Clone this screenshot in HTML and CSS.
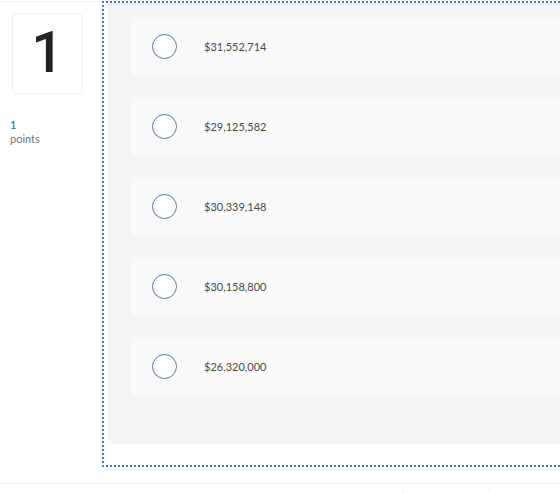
FILE: index.html
```html
<!DOCTYPE html>
<html lang="en">
<head>
<meta charset="utf-8">
<title>Question 1</title>
<link rel="stylesheet" href="styles.css">
</head>
<body>
<div class="topline"></div>
<div class="question">
  <div class="meta">
    <div class="qnum">1</div>
    <div class="pts"><span class="pts-val">1</span><span class="pts-label">points</span></div>
  </div>
  <div class="answer-area">
    <div class="panel">
      <label class="option"><span class="radio"></span><span class="opt-text">$31,552,714</span></label>
      <label class="option"><span class="radio"></span><span class="opt-text">$29,125,582</span></label>
      <label class="option"><span class="radio"></span><span class="opt-text">$30,339,148</span></label>
      <label class="option"><span class="radio"></span><span class="opt-text">$30,158,800</span></label>
      <label class="option"><span class="radio"></span><span class="opt-text">$26,320,000</span></label>
    </div>
  </div>
</div>
<div class="footer">
  <div class="f-spacer"></div>
  <div class="f-btn"></div>
  <div class="f-btn"></div>
</div>
</body>
</html>
```
FILE: styles.css
```css
html, body {
  margin: 0;
  padding: 0;
  background: #fff;
  overflow: hidden;
  font-family: Lato, "Open Sans", sans-serif;
}
body {
  width: 760px;
}
.topline {
  height: 1px;
  border-bottom: 1px solid #f0f0f0;
}
.question {
  display: flex;
  align-items: flex-start;
  margin-top: -1px;
}
.meta {
  width: 102px;
  flex: none;
  padding: 12px 0 0 0;
  box-sizing: border-box;
}
.qnum {
  margin-left: 12px;
  width: 71px;
  height: 81px;
  box-sizing: border-box;
  border: 1px solid #eeeeee;
  border-radius: 5px;
  display: flex;
  align-items: center;
  justify-content: center;
  font-family: Roboto, sans-serif;
  font-size: 57px;
  font-weight: 500;
  color: #222;
  line-height: 1;
  padding-bottom: 2px;
}
.pts {
  margin: 24px 0 0 10px;
  display: flex;
  flex-direction: column;
  font-size: 11px;
  line-height: 14px;
}
.pts-val { color: #2a5ea4; }
.pts-label { color: #767676; }
.answer-area {
  flex: 1;
  border: 2px dotted #4a7cc4;
  padding: 0 0 21px 4px;
  margin-top: 0;
}
.panel {
  background: #f4f4f4;
  border-radius: 0 0 0 4px;
  padding: 14px 0 49px 23px;
  display: flex;
  flex-direction: column;
  gap: 22px;
}
.option {
  display: flex;
  align-items: center;
  height: 58px;
  background: #fafafa;
  border-radius: 3px 0 0 3px;
  padding-left: 21px;
}
.radio {
  width: 25px;
  height: 25px;
  box-sizing: border-box;
  border: 1.5px solid #4c79ae;
  border-radius: 50%;
  background: #fff;
  flex: none;
}
.opt-text {
  margin-left: 27px;
  font-size: 11px;
  color: #484848;
}
.footer {
  margin-top: 16px;
  border-top: 1px solid #eeeeee;
  display: flex;
  height: 12px;
}
.f-spacer {
  width: 403px;
}
.f-btn {
  width: 85px;
  margin-top: 3px;
  border-left: 1px solid #f2f2f2;
}
```
